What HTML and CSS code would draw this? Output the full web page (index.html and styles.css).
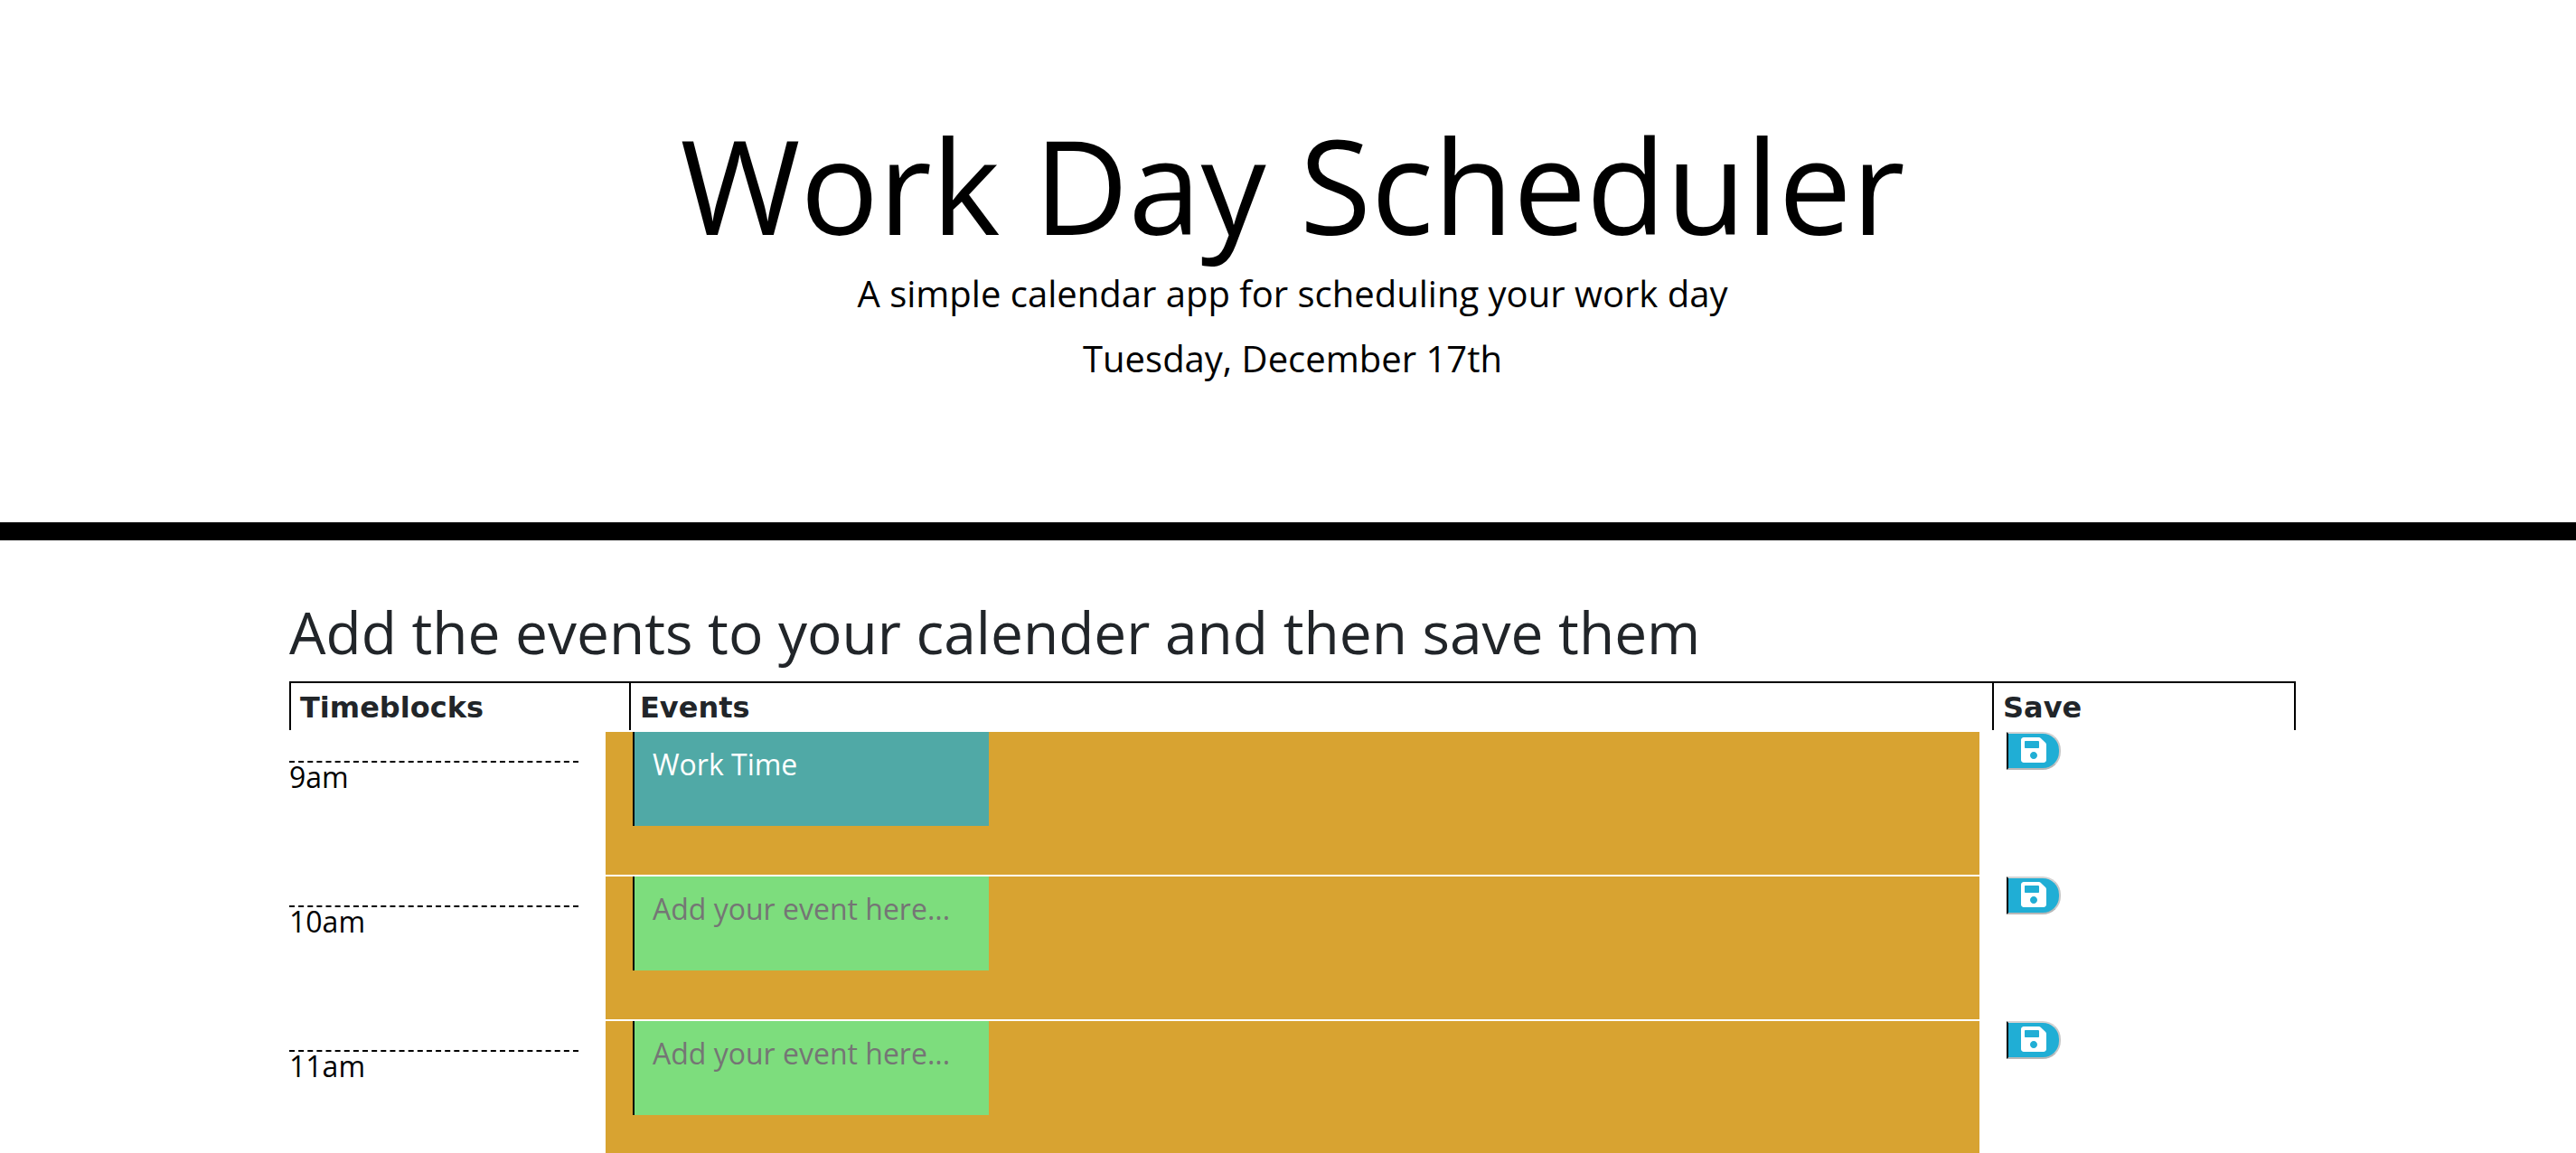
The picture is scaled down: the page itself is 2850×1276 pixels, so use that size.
FILE: index.html
```html
<!DOCTYPE html>
<html lang="en">
<head>
  <meta charset="utf-8">
  <meta name="viewport" content="width=device-width, initial-scale=1">
  <title>Work Day Scheduler</title>
  <link rel="stylesheet" href="styles.css">
</head>
<body>
  <svg class="sprite" aria-hidden="true">
    <symbol id="save" viewBox="0 0 448 512">
      <path d="M433.941 129.941l-83.882-83.882A48 48 0 0 0 316.118 32H48C21.49 32 0 53.49 0 80v352c0 26.51 21.49 48 48 48h352c26.51 0 48-21.49 48-48V163.882a48 48 0 0 0-14.059-33.941zM224 416c-35.346 0-64-28.654-64-64 0-35.346 28.654-64 64-64s64 28.654 64 64c0 35.346-28.654 64-64 64zm96-304.52V212c0 6.627-5.373 12-12 12H76c-6.627 0-12-5.373-12-12V108c0-6.627 5.373-12 12-12h228.52c3.183 0 6.235 1.264 8.485 3.515l3.48 3.48A11.996 11.996 0 0 1 320 111.48z"/>
    </symbol>
  </svg>

  <header class="jumbotron">
    <h1 class="title">Work Day Scheduler</h1>
    <p class="lead">A simple calendar app for scheduling your work day</p>
    <p class="lead">Tuesday, December 17th</p>
  </header>

  <main class="container">
    <h2 class="heading">Add the events to your calender and then save them</h2>
    <table class="labels">
      <thead>
        <tr>
          <th class="label-time" scope="col">Timeblocks</th>
          <th scope="col">Events</th>
          <th class="label-save" scope="col">Save</th>
        </tr>
      </thead>
    </table>

    <form class="row">
      <div class="col-time"><label class="hour" for="event-9">9am</label></div>
      <div class="col-event"><textarea class="event past" id="event-9" placeholder="Add your event here...">Work Time</textarea></div>
      <div class="col-save"><button class="save" type="button" aria-label="Save 9am"><svg class="icon"><use href="#save"/></svg></button></div>
    </form>
    <form class="row">
      <div class="col-time"><label class="hour" for="event-10">10am</label></div>
      <div class="col-event"><textarea class="event future" id="event-10" placeholder="Add your event here..."></textarea></div>
      <div class="col-save"><button class="save" type="button" aria-label="Save 10am"><svg class="icon"><use href="#save"/></svg></button></div>
    </form>
    <form class="row">
      <div class="col-time"><label class="hour" for="event-11">11am</label></div>
      <div class="col-event"><textarea class="event future" id="event-11" placeholder="Add your event here..."></textarea></div>
      <div class="col-save"><button class="save" type="button" aria-label="Save 11am"><svg class="icon"><use href="#save"/></svg></button></div>
    </form>
  </main>
</body>
</html>
```
FILE: styles.css
```css
* {
  box-sizing: border-box;
}

body {
  margin: 0;
  background: #fff;
  color: #212529;
  font-family: "Open Sans", sans-serif;
  font-size: 32px;
  line-height: 48px;
}

.sprite {
  display: none;
}

.jumbotron {
  padding: 118px 0 151px 10px;
  border-bottom: 20px solid #000;
  color: #000;
  text-align: center;
}

.title {
  margin: 0 0 5px;
  font-size: 144px;
  font-weight: 400;
  line-height: 172px;
}

.lead {
  margin: 0;
  font-size: 40px;
  line-height: 60px;
}

.lead + .lead {
  margin-top: 12px;
}

.container {
  width: 80%;
  max-width: 2280px;
  margin: 0 auto;
  padding: 64px 25px 0 35px;
}

.heading {
  margin: 0 0 16px;
  font-size: 64px;
  font-weight: 400;
  line-height: 76px;
}

.labels {
  width: 100%;
  border-top: 2px solid #000;
  border-right: 2px solid #000;
  border-spacing: 0;
  table-layout: fixed;
}

.labels th {
  padding: 3px 10px 1px;
  border-left: 2px solid #000;
  font-family: Verdana, "DejaVu Sans", sans-serif;
  font-weight: 700;
  text-align: left;
}

.label-time {
  width: 376px;
}

.label-save {
  width: 334px;
}

.row {
  display: grid;
  grid-template-columns: 2fr 8fr 2fr;
  margin: 0 -30px;
  border-top: 2px solid #fff;
}

.col-time {
  padding: 32px 30px 0;
}

.hour {
  display: block;
  border-top: 2px dashed #000;
  color: #000;
  line-height: 32px;
}

.col-event {
  min-height: 158px;
  padding: 0 30px;
  background: #d8a331;
}

.event {
  display: block;
  width: 394px;
  height: 104px;
  padding: 12px 20px;
  border: 0;
  border-left: 2px solid #000;
  color: #fff;
  font: inherit;
  overflow: auto;
  resize: none;
}

.event::placeholder {
  color: #757575;
}

.past {
  background: #50a9a6;
}

.future {
  background: #7ddd7d;
}

.col-save {
  padding: 0 30px;
}

.save {
  display: flex;
  align-items: center;
  justify-content: center;
  width: 60px;
  height: 42px;
  padding: 0 0 2px;
  border: 2px solid;
  border-color: #d3d3d3 #c8c8c8 #b8b8b8 #000;
  border-radius: 0 20px 20px 0;
  background: #20aed5;
  color: #fff;
}

.icon {
  width: 28px;
  height: 32px;
  fill: currentColor;
}
```
